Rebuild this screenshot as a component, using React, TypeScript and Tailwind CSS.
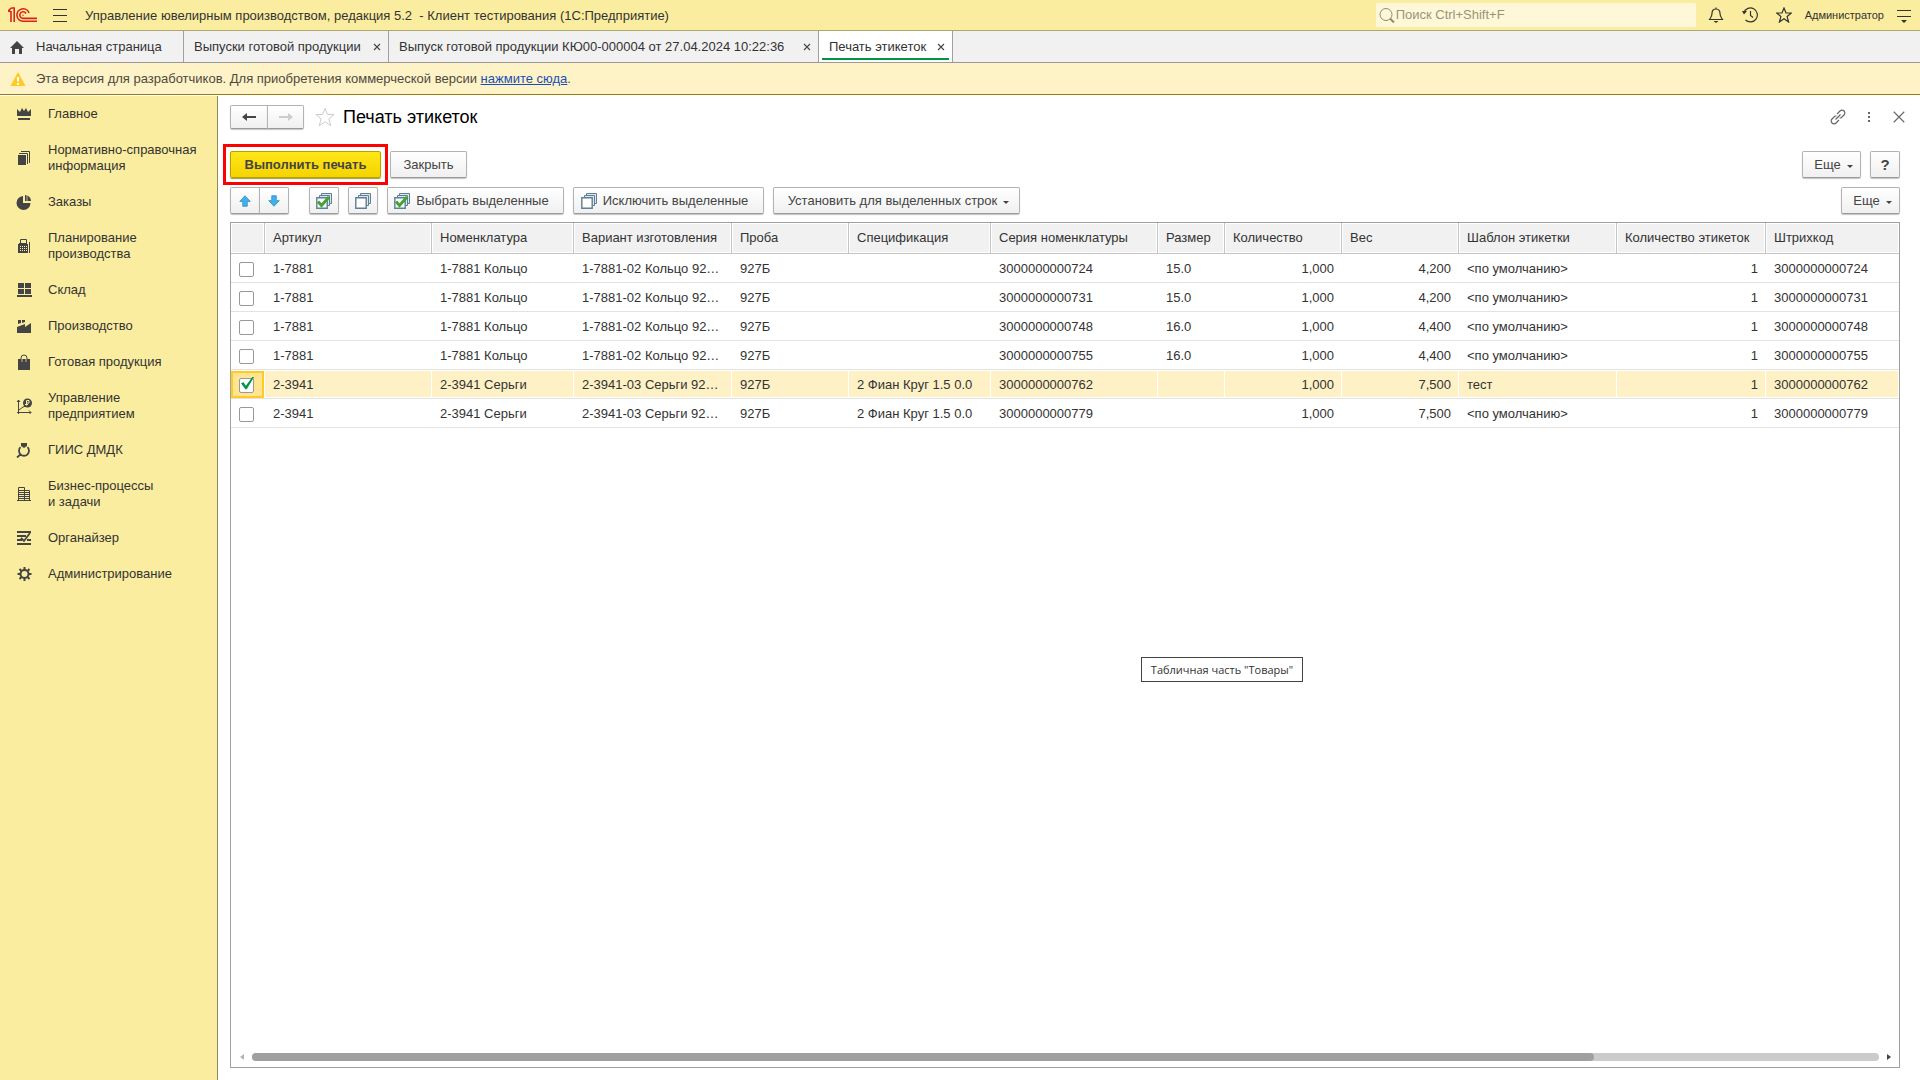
import { useState } from 'react';
import type { ReactNode } from 'react';
import clsx from 'clsx';

interface Product {
  article: string;
  name: string;
  variant: string;
  spec: string;
  series: string;
  size: string;
  weight: string;
  template: string;
}

const PRODUCTS: Product[] = [
  { article: '1-7881', name: '1-7881 Кольцо', variant: '1-7881-02 Кольцо 92…', spec: '', series: '3000000000724', size: '15.0', weight: '4,200', template: '<по умолчанию>' },
  { article: '1-7881', name: '1-7881 Кольцо', variant: '1-7881-02 Кольцо 92…', spec: '', series: '3000000000731', size: '15.0', weight: '4,200', template: '<по умолчанию>' },
  { article: '1-7881', name: '1-7881 Кольцо', variant: '1-7881-02 Кольцо 92…', spec: '', series: '3000000000748', size: '16.0', weight: '4,400', template: '<по умолчанию>' },
  { article: '1-7881', name: '1-7881 Кольцо', variant: '1-7881-02 Кольцо 92…', spec: '', series: '3000000000755', size: '16.0', weight: '4,400', template: '<по умолчанию>' },
  { article: '2-3941', name: '2-3941 Серьги', variant: '2-3941-03 Серьги 92…', spec: '2 Фиан Круг 1.5 0.0', series: '3000000000762', size: '', weight: '7,500', template: 'тест' },
  { article: '2-3941', name: '2-3941 Серьги', variant: '2-3941-03 Серьги 92…', spec: '2 Фиан Круг 1.5 0.0', series: '3000000000779', size: '', weight: '7,500', template: '<по умолчанию>' },
];

const COLUMNS = [
  { title: '', width: 'w-[34px]' },
  { title: 'Артикул', width: 'w-[167px]' },
  { title: 'Номенклатура', width: 'w-[142px]' },
  { title: 'Вариант изготовления', width: 'w-[158px]' },
  { title: 'Проба', width: 'w-[117px]' },
  { title: 'Спецификация', width: 'w-[142px]' },
  { title: 'Серия номенклатуры', width: 'w-[167px]' },
  { title: 'Размер', width: 'w-[67px]' },
  { title: 'Количество', width: 'w-[117px]' },
  { title: 'Вес', width: 'w-[117px]' },
  { title: 'Шаблон этикетки', width: 'w-[158px]' },
  { title: 'Количество этикеток', width: 'w-[149px]' },
  { title: 'Штрихкод', width: '' },
];

const CURRENT_ROW = 4;

function Icon({ children, className = 'size-4' }: { children: ReactNode; className?: string }) {
  return (
    <svg viewBox="0 0 16 16" className={clsx('shrink-0', className)} fill="currentColor" aria-hidden="true">
      {children}
    </svg>
  );
}

const SECTIONS = [
  {
    title: 'Главное',
    icon: <path d="M1 3l3 3 2-4 2 3 2-3 2 4 3-3v7H1zM2 12h12v2H2z" />,
  },
  {
    title: 'Нормативно-справочная информация',
    icon: (
      <>
        <path d="M2 5h8v10H2z" />
        <path d="M3 3.500h8.500V14M5 1.500h8.500V13" fill="none" stroke="currentColor" />
      </>
    ),
  },
  {
    title: 'Заказы',
    icon: (
      <>
        <path d="M7 2v7h7.500A7 7 0 1 1 7 2z" />
        <path d="M9 1a6 6 0 0 1 6 6H9z" />
        <path d="M11 1v6" stroke="#fbed9f" strokeWidth="0.7" />
      </>
    ),
  },
  {
    title: 'Планирование производства',
    icon: (
      <>
        <path d="M4.500 6V1.500h6V6M3 5.500h8" fill="none" stroke="currentColor" />
        <path d="M2 6h10v9H2zM13 4h1v11h-1z" />
        <path d="M4 8.500h7M4 10.500h7M4 12.500h7" stroke="#fbed9f" strokeDasharray="1 1" />
      </>
    ),
  },
  {
    title: 'Склад',
    icon: <path d="M2 1h6v5H2zM9 1h6v5H9zM2 7h6v5H2zM9 7h6v5H9zM1 13h15v2H1z" />,
  },
  {
    title: 'Производство',
    icon: <path d="M2 2h3v3l-3 1zM6 2h3v2L6 5zM1 9l8-3v3l6-4v10H1z" />,
  },
  {
    title: 'Готовая продукция',
    icon: (
      <>
        <path d="M2 5h12v11H2z" />
        <path d="M5 8V4a3 3 0 0 1 6 0v4" fill="none" stroke="currentColor" />
        <path d="M6 8V5M10 8V5" stroke="#fbed9f" strokeWidth="0.7" />
      </>
    ),
  },
  {
    title: 'Управление предприятием',
    icon: (
      <>
        <path d="M2.500 16V2M1 14.500h14M1 4l1.500-2L4 4M13 12.500l2 2-2 2M3 12l4-3 3-1" fill="none" stroke="currentColor" />
        <circle cx="11.500" cy="5" r="4.500" />
        <path d="M10.500 2.500v5M10.500 2.500H13v2.500h-2.500M9 6.500h3" fill="none" stroke="#fbed9f" />
      </>
    ),
  },
  {
    title: 'ГИИС ДМДК',
    icon: (
      <>
        <path d="M5 1h6v3L8 6 5 4z" />
        <path d="M4.500 5.200a5 5 0 1 0 7 0M5 12l-4 3.500" fill="none" stroke="currentColor" strokeWidth="1.800" />
      </>
    ),
  },
  {
    title: (
      <>
        Бизнес-процессы
        <br />и задачи
      </>
    ),
    icon: (
      <path
        d="M2.500 15V1.500h6V15M8.500 4.500h5V15M1 14.500h14M3 4.500h5M3 6.500h5M3 8.500h5M3 10.500h5M3 12.500h5M9 6.500h4M9 8.500h4M9 10.500h4M9 12.500h4"
        fill="none"
        stroke="currentColor"
      />
    ),
  },
  {
    title: 'Органайзер',
    icon: (
      <>
        <path d="M1 1h14v2H1zM1 5h9v2H1zM1 9h5v2H1zM11 9h4v2h-4zM1 13h14v2H1z" />
        <path d="M5 8l3 3 6-8" fill="none" stroke="currentColor" strokeWidth="1.800" />
      </>
    ),
  },
  {
    title: 'Администрирование',
    icon: (
      <>
        <circle cx="8.500" cy="8" r="4" fill="none" stroke="currentColor" strokeWidth="2" />
        <path
          d="M8.500 1v3M8.500 12v3M1.500 8h3M12.500 8h3M3.500 3l2 2M11.500 11l2 2M13.500 3l-2 2M5.500 11l-2 2"
          stroke="currentColor"
          strokeWidth="2"
        />
      </>
    ),
  },
];

const TABS = [
  { title: 'Выпуски готовой продукции', width: 'w-[205px]' },
  { title: 'Выпуск готовой продукции КЮ00-000004 от 27.04.2024 10:22:36', width: 'w-[430px]' },
  { title: 'Печать этикеток', width: 'w-[134px]' },
];

function Logo() {
  return (
    <svg viewBox="0 0 30 16" className="h-4 w-[30px] shrink-0" fill="none" stroke="#d9231c" strokeWidth="1.600" aria-label="1С">
      <path d="M0 4.200h2.500M3 15V4M3.200 1h3v14M3.200 1L0 4" />
      <path d="M21 6A6.200 6.200 0 1 0 15 14.200h14" />
      <path d="M18 6.500a3.300 3.300 0 1 0-3 4.900h14" />
      <path d="M15.500 8.200h-1" />
    </svg>
  );
}

function Stack({ checked }: { checked?: boolean }) {
  return (
    <svg viewBox="0 0 16 16" className="size-4 shrink-0" fill="#fff" stroke="#5f7f94" aria-hidden="true">
      <path d="M5.500.500h10v10h-10z" fill="#dce6ec" />
      <path d="M3.500 2.500h10v10h-10z" fill="#dce6ec" />
      <path d="M.800 4.800h10.400v10.400H.800z" strokeWidth="1.400" />
      {checked && <path d="M2 8.500l3.500 4L13 4" fill="none" stroke="#3fa535" strokeWidth="3" />}
    </svg>
  );
}

function Arrow({ down }: { down?: boolean }) {
  return (
    <Icon className={clsx('size-3', down && 'rotate-180')}>
      <path d="M8 1l7 7.500h-4V15H5V8.500H1z" fill="#41b1ec" stroke="#2a86bd" />
    </Icon>
  );
}

function Caret() {
  return (
    <svg viewBox="0 0 6 3" className="mt-1 h-[3px] w-[6px] shrink-0" fill="currentColor" aria-hidden="true">
      <path d="M0 0h6L3 3z" />
    </svg>
  );
}

interface ButtonProps {
  children: ReactNode;
  label?: string;
  short?: boolean;
  className?: string;
}

function Button({ children, label, short, className }: ButtonProps) {
  return (
    <button
      type="button"
      aria-label={label}
      className={clsx(
        'flex items-center justify-center rounded-xs border border-[#b3b3b3] border-b-[#9a9a9a] bg-linear-to-b from-white to-[#f0f0f0] whitespace-nowrap text-[#444] shadow-[0_1px_1px_#c4c4c4]',
        short ? 'h-6' : 'h-[27px]',
        className,
      )}
    >
      {children}
    </button>
  );
}

function Header() {
  return (
    <header className="flex h-[31px] items-center border-b border-[#aca76c] bg-[#fbed9f] pr-2 pl-2">
      <Logo />
      <button type="button" aria-label="Меню" className="ml-[14px]">
        <Icon>
          <path d="M1 2h14v1H1zM1 8h14v1H1zM1 14h14v1H1z" />
        </Icon>
      </button>
      <span className="ml-[17px] pt-0.5 whitespace-pre">
        Управление ювелирным производством, редакция 5.2{'  '}- Клиент тестирования (1С:Предприятие)
      </span>
      <div className="ml-auto flex items-center">
        <label className="flex h-6 w-[320px] items-center rounded-xs bg-[#fef8d8] pl-[3px]">
          <Icon className="size-4 text-[#8f8b73]">
            <circle cx="7" cy="7.500" r="6" fill="none" stroke="currentColor" />
            <path d="M11 11.500l4 4" stroke="currentColor" strokeWidth="2" />
          </Icon>
          <input
            type="text"
            placeholder="Поиск Ctrl+Shift+F"
            aria-label="Поиск"
            className="ml-px min-w-0 flex-1 bg-transparent outline-none placeholder:text-[#98947c]"
          />
        </label>
        <button type="button" aria-label="Уведомления" className="ml-3">
          <Icon>
            <path d="M8 2c-3 0-4 2-4 4.500C4 9.500 2.500 11 1.500 12.500h13C13.500 11 12 9.500 12 6.500 12 4 11 2 8 2zM8 2V.500" fill="none" stroke="currentColor" strokeWidth="1.200" />
            <path d="M5.500 14h5L8 16z" />
          </Icon>
        </button>
        <button type="button" aria-label="История" className="ml-[18px]">
          <Icon>
            <path d="M1.800 5.500A7 7 0 1 1 3.500 13M8.500 4v4.500l2.500 2" fill="none" stroke="currentColor" strokeWidth="1.200" />
            <path d="M0 4h5L2 7.500z" />
          </Icon>
        </button>
        <button type="button" aria-label="Избранное" className="ml-[18px]">
          <Icon>
            <path d="M8 1l2 5h5.300l-4.200 3.500 1.500 5.500L8 11.800 3.400 15l1.500-5.500L.700 6H6z" fill="none" stroke="currentColor" strokeWidth="1.200" />
          </Icon>
        </button>
        <button type="button" className="ml-[13px] text-[11px]">
          Администратор
        </button>
        <button type="button" aria-label="Настройки" className="ml-3">
          <Icon>
            <path d="M1 3h14v1H1zM1 9h14v1H1zM5 13h6l-3 3z" />
          </Icon>
        </button>
      </div>
    </header>
  );
}

function TabBar() {
  return (
    <nav className="flex h-8 border-b border-[#999] bg-[#f1f1f1]">
      <button type="button" className="flex w-[184px] items-center border-r border-[#a0a0a0] pl-[9px]">
        <Icon className="size-4 text-[#444]">
          <path d="M8 2l7 7h-2v6h-3v-5H6v5H3V9H1z" />
        </Icon>
        <span className="ml-[11px]">Начальная страница</span>
      </button>
      {TABS.map((tab, i) => {
        const active = i === TABS.length - 1;
        return (
          <div
            key={tab.title}
            className={clsx('flex items-center border-r border-[#a0a0a0] px-[3px]', tab.width, active && 'bg-white')}
          >
            <div
              className={clsx(
                'flex h-[27px] flex-1 items-center justify-between border-b-2 pt-0.5 pr-1 pl-[7px] whitespace-nowrap',
                active ? 'border-[#009646]' : 'border-transparent',
              )}
            >
              <button type="button">{tab.title}</button>
              <button type="button" aria-label="Закрыть вкладку" className="text-[#444]">
                <Icon className="size-2">
                  <path d="M2 2l12 12M14 2L2 14" stroke="currentColor" strokeWidth="2.200" />
                </Icon>
              </button>
            </div>
          </div>
        );
      })}
    </nav>
  );
}

function Sidebar() {
  return (
    <aside className="w-[218px] shrink-0 border-r border-[#8f8a5c] bg-[#fbed9f] pt-[10px]">
      <ul className="flex flex-col gap-5">
        {SECTIONS.map((section, i) => (
          <li key={i}>
            <a href="#" className="flex items-center pl-4 leading-4">
              <Icon className="size-4 text-[#444]">{section.icon}</Icon>
              <span className="ml-4 w-[160px]">{section.title}</span>
            </a>
          </li>
        ))}
      </ul>
    </aside>
  );
}

function ProductsTable() {
  const [checked, setChecked] = useState<number[]>([CURRENT_ROW]);

  const toggle = (index: number) =>
    setChecked((prev) => (prev.includes(index) ? prev.filter((i) => i !== index) : [...prev, index]));

  return (
    <table className="w-full table-fixed border-separate border-spacing-0 text-left">
      <thead>
        <tr className="h-[31px]">
          {COLUMNS.map((column, i) => (
            <th
              key={i}
              className={clsx(
                'truncate border-b border-[#c4c4c4] bg-[#f1f1f1] px-2 font-normal shadow-[inset_0_0_0_1px_#fff]',
                i < COLUMNS.length - 1 && 'border-r',
                column.width,
              )}
            >
              {column.title}
            </th>
          ))}
        </tr>
      </thead>
      <tbody>
        {PRODUCTS.map((product, i) => {
          const current = i === CURRENT_ROW;
          const cell = clsx(
            'truncate border-b border-[#e2e2e2] px-2 pt-0.5',
            current && 'bg-[#fdf1c5] shadow-[inset_-1px_1px_0_#fff,inset_0_-1px_0_#fff]',
          );
          return (
            <tr key={product.series} className="h-[29px]">
              <td className="border-b border-[#e2e2e2] p-0">
                <div
                  className={clsx(
                    'flex h-[27px] w-[33px] items-center border-2 pt-0.5 pl-[6px]',
                    current ? 'border-[#ffc926] bg-[#ffe491]' : 'border-transparent',
                  )}
                >
                  <span className="relative size-[15px]">
                    <input
                      type="checkbox"
                      aria-label={product.series}
                      checked={checked.includes(i)}
                      onChange={() => toggle(i)}
                      className="block size-[15px] appearance-none rounded-xs border border-[#999] bg-white"
                    />
                    {checked.includes(i) && (
                      <Icon className="pointer-events-none absolute -top-px left-[2px] size-[14px] text-[#009646]">
                        <path d="M0 7l3-1 2.500 4L13 0h2L6.500 14H5z" />
                      </Icon>
                    )}
                  </span>
                </div>
              </td>
              <td className={cell}>{product.article}</td>
              <td className={cell}>{product.name}</td>
              <td className={cell}>{product.variant}</td>
              <td className={cell}>927Б</td>
              <td className={cell}>{product.spec}</td>
              <td className={cell}>{product.series}</td>
              <td className={cell}>{product.size}</td>
              <td className={clsx(cell, 'text-right')}>1,000</td>
              <td className={clsx(cell, 'text-right')}>{product.weight}</td>
              <td className={cell}>{product.template}</td>
              <td className={clsx(cell, 'text-right')}>1</td>
              <td className={cell}>{product.series}</td>
            </tr>
          );
        })}
      </tbody>
    </table>
  );
}

function ScrollBar() {
  return (
    <div className="mt-auto mb-[6px] flex items-center gap-2 pr-2 pl-[9px]">
      <svg viewBox="0 0 4 6" className="h-[6px] w-1" fill="#b5b5b5" aria-hidden="true">
        <path d="M4 0v6L0 3z" />
      </svg>
      <div className="h-2 flex-1 rounded-full bg-[#cbcbcb]">
        <div className="h-2 w-[82.5%] rounded-full bg-[#a0a0a0]" />
      </div>
      <svg viewBox="0 0 4 6" className="h-[6px] w-1" fill="#444" aria-hidden="true">
        <path d="M0 0v6l4-3z" />
      </svg>
    </div>
  );
}

export default function App() {
  return (
    <div className="flex min-h-screen flex-col bg-white font-['Liberation_Sans',Arial,sans-serif] text-[13px] leading-4 text-[#333]">
      <Header />
      <TabBar />
      <div className="flex h-8 items-center border-b border-[#957b14] bg-[#fef2c7] pl-[10px] text-[#4d4a3e]">
        <Icon>
          <path d="M8 1l7.500 14H.500z" fill="#ffc926" />
          <path d="M7 6h2v4.500H7zM7 12h2v2H7z" fill="#fff" />
        </Icon>
        <p className="ml-[10px]">
          Эта версия для разработчиков. Для приобретения коммерческой версии{' '}
          <a href="#" className="text-[#1a4fb4] underline">
            нажмите сюда
          </a>
          .
        </p>
      </div>
      <div className="mt-px flex flex-1">
        <Sidebar />
        <main className="flex min-w-0 flex-1 flex-col pt-[9px] pr-5 pb-3 pl-3">
          <div className="flex h-6 items-center">
            <div className="flex">
              <Button short label="Назад" className="w-[38px] rounded-r-none">
                <Icon>
                  <path d="M1 8l5-4v3h9v2H6v3z" />
                </Icon>
              </Button>
              <Button short label="Вперед" className="-ml-px w-[37px] rounded-l-none">
                <Icon className="size-4 text-[#ccc]">
                  <path d="M15 8l-5-4v3H1v2h9v3z" />
                </Icon>
              </Button>
            </div>
            <button type="button" aria-label="В избранное" className="ml-[11px] text-[#ccc]">
              <Icon className="size-5">
                <path d="M8 1l2 5h5.300l-4.200 3.500 1.500 5.500L8 11.800 3.400 15l1.500-5.500L.700 6H6z" fill="none" stroke="currentColor" strokeWidth="0.800" />
              </Icon>
            </button>
            <h1 className="ml-2 text-[18px] leading-6 text-black">Печать этикеток</h1>
            <div className="-mr-[5px] ml-auto flex items-center text-[#666]">
              <button type="button" aria-label="Ссылка">
                <Icon>
                  <path
                    d="M7 5l3-3a2.800 2.800 0 0 1 4 4l-3 3H9.500M9 11l-3 3a2.800 2.800 0 0 1-4-4l3-3h1.500M5.500 10.500l5-5"
                    fill="none"
                    stroke="currentColor"
                    strokeWidth="1.200"
                  />
                </Icon>
              </button>
              <button type="button" aria-label="Еще" className="ml-[15px]">
                <Icon>
                  <path d="M7 3h2v2H7zM7 7h2v2H7zM7 11h2v2H7z" />
                </Icon>
              </button>
              <button type="button" aria-label="Закрыть форму" className="ml-4">
                <Icon className="size-3">
                  <path d="M1 1l14 14M15 1L1 15" stroke="currentColor" strokeWidth="1.500" />
                </Icon>
              </button>
            </div>
          </div>

          <div className="mt-[22px] flex items-center">
            <div className="relative">
              <button
                type="button"
                className="flex h-[27px] w-[151px] items-center justify-center rounded-xs border border-[#b8a200] bg-linear-to-b from-[#ffe616] to-[#f5d400] font-bold text-[#444] shadow-[0_1px_1px_#a89a3a]"
              >
                Выполнить печать
              </button>
              <div className="pointer-events-none absolute -inset-[7px] border-3 border-[#ff0000]" />
            </div>
            <Button className="ml-[9px] w-[77px]">Закрыть</Button>
            <Button className="ml-auto w-[59px] gap-[6px] pl-1">
              Еще <Caret />
            </Button>
            <Button label="Справка" className="ml-[9px] w-[30px] text-[15px] font-bold">
              ?
            </Button>
          </div>

          <div className="mt-[9px] flex items-center">
            <Button label="Переместить вверх" className="w-[30px] rounded-r-none">
              <Arrow />
            </Button>
            <Button label="Переместить вниз" className="-ml-px w-[30px] rounded-l-none">
              <Arrow down />
            </Button>
            <Button label="Выбрать все" className="ml-5 w-[30px]">
              <Stack checked />
            </Button>
            <Button label="Исключить все" className="ml-[9px] w-[30px]">
              <Stack />
            </Button>
            <Button className="ml-[9px] w-[177px] gap-[6px] pr-2">
              <Stack checked />
              Выбрать выделенные
            </Button>
            <Button className="ml-[9px] w-[191px] gap-[6px] pr-2">
              <Stack />
              Исключить выделенные
            </Button>
            <Button className="ml-[9px] w-[247px] gap-[6px] pl-1">
              Установить для выделенных строк <Caret />
            </Button>
            <Button className="ml-auto w-[59px] gap-[6px] pl-1">
              Еще <Caret />
            </Button>
          </div>

          <div className="relative mt-2 flex flex-1 flex-col border border-[#a0a0a0]">
            <ProductsTable />
            <div
              role="tooltip"
              className="absolute top-[434px] left-[910px] flex h-[25px] w-[162px] items-center justify-center border border-[#444] bg-white font-['Open_Sans','Noto_Sans',sans-serif] text-[11px] whitespace-nowrap"
            >
              Табличная часть "Товары"
            </div>
            <ScrollBar />
          </div>
        </main>
      </div>
    </div>
  );
}
